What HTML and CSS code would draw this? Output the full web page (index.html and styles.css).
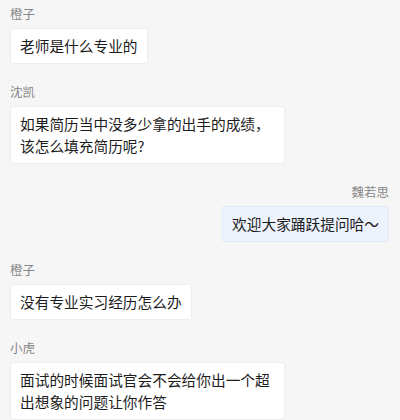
FILE: index.html
```html
<!DOCTYPE html>
<html lang="zh-CN">

<head>
  <meta charset="UTF-8">
  <meta name="viewport" content="width=device-width, initial-scale=1.0">
  <title>问答</title>
  <link rel="stylesheet" href="styles.css">
</head>

<body>
  <div class="chat">
    <div class="msg">
      <div class="name">橙子</div>
      <div class="bubble">老师是什么专业的</div>
    </div>

    <div class="msg">
      <div class="name">沈凯</div>
      <div class="bubble">如果简历当中没多少拿的出手的成绩，该怎么填充简历呢?</div>
    </div>

    <div class="msg mine">
      <div class="name">魏若思</div>
      <div class="bubble">欢迎大家踊跃提问哈～</div>
    </div>

    <div class="msg">
      <div class="name">橙子</div>
      <div class="bubble">没有专业实习经历怎么办</div>
    </div>

    <div class="msg">
      <div class="name">小虎</div>
      <div class="bubble">面试的时候面试官会不会给你出一个超出想象的问题让你作答</div>
    </div>
  </div>
</body>

</html>
```

FILE: styles.css
```css
body {
  margin: 0;
  padding: 0;
  background: #f6f6f6;
  font-family: "Noto Sans CJK SC", "Noto Sans", sans-serif;
  color: #1c1c1c;
}

.chat {
  display: flex;
  flex-direction: column;
  gap: 20px;
  padding: 6px 11px 0 10px;
}

.msg {
  display: flex;
  flex-direction: column;
  align-items: flex-start;
}

.msg.mine {
  align-items: flex-end;
}

.name {
  font-size: 12.5px;
  line-height: 16px;
  color: #868686;
  margin-bottom: 6px;
}

.bubble {
  box-sizing: border-box;
  max-width: 275px;
  padding: 6px 9px;
  font-size: 14.7px;
  line-height: 22px;
  background: #fff;
  border: 1px solid #ededed;
  border-radius: 3px;
}

.mine .bubble {
  background: #edf3fd;
  border-color: #e2eaf6;
}
```
